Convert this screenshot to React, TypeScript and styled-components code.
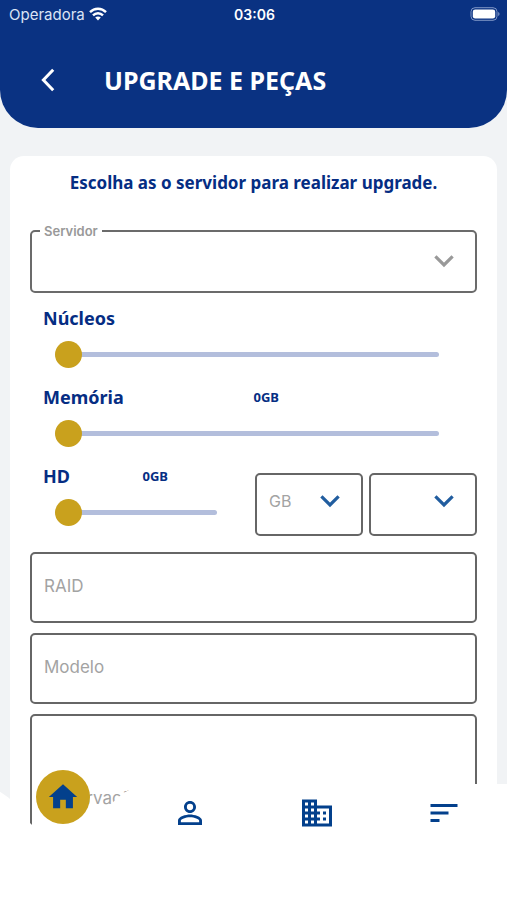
import React, { useState } from "react";
import styled, { createGlobalStyle } from "styled-components";
import { MdDomain, MdHome, MdPersonOutline, MdSort } from "react-icons/md";

const navy = "#0a3282";
const gold = "#c9a11d";
const bodyFont = `Inter, "Liberation Sans", sans-serif`;
const headingFont = `"Noto Sans", "Open Sans", sans-serif`;

const GlobalStyle = createGlobalStyle`
  *, *::before, *::after { box-sizing: border-box; }
  body { margin: 0; background: #f1f3f5; font-family: ${bodyFont}; }
  button, input, select, textarea { font: inherit; }
`;

const Screen = styled.div`
  display: flex;
  flex-direction: column;
  min-height: 100vh;
`;

const Header = styled.header`
  background: ${navy};
  color: #fff;
  border-radius: 0 0 38px 38px;
  padding-bottom: 24px;
`;

const StatusBar = styled.div`
  display: grid;
  grid-template-columns: 1fr auto 1fr;
  align-items: center;
  height: 28px;
  padding: 0 7px 0 9px;
  font-size: 14px;
`;

const Carrier = styled.span`
  display: flex;
  align-items: center;
  gap: 4px;
  color: #dbe4f5;
  font-size: 15px;
`;

const Clock = styled.time`
  font-weight: 600;
`;

const BatteryIcon = styled.svg`
  justify-self: end;
`;

const TitleBar = styled.div`
  display: flex;
  align-items: center;
  gap: 36px;
  height: 48px;
  margin-top: 28px;
  padding-left: 28px;
`;

const BackButton = styled.button`
  display: grid;
  place-items: center;
  width: 40px;
  height: 40px;
  padding: 0;
  border: 0;
  background: none;
  color: inherit;
`;

const Title = styled.h1`
  margin: 0;
  font: 700 25px/32px ${headingFont};
`;

const Card = styled.main`
  flex: 1;
  display: flex;
  flex-direction: column;
  margin: 28px 10px 0;
  padding: 14px 20px 16px;
  border-radius: 14px;
  background: #fff;
`;

const Intro = styled.p`
  margin: 0 0 28px;
  text-align: center;
  color: #052d83;
  font: 700 17px/26px ${headingFont};
`;

const ServerField = styled.fieldset`
  min-width: 0;
  margin: 0 0 12px;
  padding: 0;
  border: 2px solid #6b6b6b;
  border-radius: 5px;
`;

const ServerLegend = styled.legend`
  margin-left: 8px;
  padding: 0 4px;
  color: #999;
  font-size: 13px;
  font-weight: 600;
  line-height: 14px;
`;

const SelectBox = styled.div<{ $outlined?: boolean; $height: number }>`
  display: grid;
  align-items: center;
  width: 100%;
  height: ${(p) => p.$height}px;
  padding-bottom: 8px;
  border: ${(p) => (p.$outlined ? "2px solid #666" : "0")};
  border-radius: 5px;

  > * {
    grid-area: 1 / 1;
  }
`;

const Select = styled.select`
  width: 100%;
  height: 100%;
  padding: 0 44px 0 12px;
  appearance: none;
  border: 0;
  background: none;
  color: #a3a3a3;
  font-size: 16px;
`;

const Chevron = styled.svg<{ $color: string }>`
  justify-self: end;
  margin-right: 20px;
  stroke: ${(p) => p.$color};
  pointer-events: none;
`;

const SliderList = styled.div`
  display: flex;
  flex-direction: column;
  gap: 16px;
`;

const SliderField = styled.div`
  flex: 1;
  min-width: 0;
`;

const SliderHead = styled.div`
  display: grid;
  grid-template-columns: 1fr 1fr;
  align-items: center;
  color: #052d83;
  font: 700 18px/26px ${headingFont};
`;

const SliderLabel = styled.label`
  padding-left: 13px;
`;

const SliderValue = styled.output`
  font-size: 13px;
`;

const SliderTrack = styled.div`
  display: flex;
  margin-top: 10px;
  padding: 0 38px 0 25px;
`;

const Range = styled.input`
  appearance: none;
  width: 100%;
  height: 27px;
  margin: 0;
  background: none;

  &::-webkit-slider-runnable-track {
    height: 5px;
    border-radius: 3px;
    background: #b3bedc;
  }

  &::-webkit-slider-thumb {
    appearance: none;
    width: 27px;
    height: 27px;
    margin-top: -11px;
    border-radius: 50%;
    background: ${gold};
  }
`;

const DiskRow = styled.div`
  display: flex;
  align-items: flex-start;
`;

const DiskSelects = styled.div`
  display: grid;
  grid-template-columns: 108px 108px;
  gap: 6px;
  margin-top: 10px;
`;

const TextFields = styled.div`
  display: flex;
  flex-direction: column;
  gap: 10px;
  margin-top: 16px;
`;

const fieldLook = `
  width: 100%;
  border: 2px solid #666;
  border-radius: 5px;
  background: none;
  font-size: 17px;
  color: #333;
  &::placeholder { color: #a3a3a3; opacity: 1; }
`;

const TextInput = styled.input`
  ${fieldLook}
  height: 71px;
  padding: 0 12px 4px;
`;

const Notes = styled.textarea`
  ${fieldLook}
  display: block;
  height: 160px;
  padding: 72px 12px 0;
  line-height: 20px;
  resize: none;
`;

const BottomNav = styled.nav`
  position: fixed;
  inset: auto 0 0;
  height: 116px;
`;

const NavBackdrop = styled.div`
  position: absolute;
  inset: 0;
  display: grid;
  grid-template-columns: calc(12.5% + 84px) 1fr;
`;

const NavNotch = styled.div`
  display: flex;
  justify-content: flex-end;
  overflow: hidden;

  svg {
    flex: none;
  }
`;

const NavSurface = styled.div`
  background: #fff;
`;

const NavItems = styled.div`
  position: relative;
  display: grid;
  grid-template-columns: repeat(4, 1fr);
  justify-items: center;
  height: 58px;
`;

const NavButton = styled.button<{ $active?: boolean }>`
  display: grid;
  place-items: center;
  width: 54px;
  height: 54px;
  margin-top: ${(p) => (p.$active ? -14 : 2)}px;
  padding: 0;
  border: 0;
  border-radius: 50%;
  background: ${(p) => (p.$active ? gold : "none")};
  color: #03408c;
`;

function ArrowDown({ color }: { color: string }) {
  return (
    <Chevron $color={color} width="22" height="14" viewBox="0 0 22 14" fill="none" strokeWidth="3.2" aria-hidden="true">
      <path d="M2.4 2.4 11 11 19.6 2.4" />
    </Chevron>
  );
}

interface SliderProps {
  id: string;
  label: string;
  unit?: string;
}

function Slider({ id, label, unit }: SliderProps) {
  const [value, setValue] = useState(0);
  return (
    <SliderField>
      <SliderHead>
        <SliderLabel htmlFor={id}>{label}</SliderLabel>
        {unit && <SliderValue htmlFor={id}>{`${value}${unit}`}</SliderValue>}
      </SliderHead>
      <SliderTrack>
        <Range id={id} type="range" min={0} max={100} value={value} onChange={(e) => setValue(Number(e.target.value))} />
      </SliderTrack>
    </SliderField>
  );
}

export default function App() {
  return (
    <>
      <GlobalStyle />
      <Screen>
        <Header>
          <StatusBar>
            <Carrier>
              Operadora
              <svg width="18" height="14" viewBox="0 0 18 14" fill="none" stroke="#fff" strokeWidth="2.4" aria-hidden="true">
                <path d="M1 5.2C5.4.6 12.6.6 17 5.2" />
                <path d="M4 8.4c2.8-2.9 7.2-2.9 10 0" />
                <path d="M6.2 10.6c1.6-1.6 4-1.6 5.6 0L9 13.4Z" fill="#fff" stroke="none" />
              </svg>
            </Carrier>
            <Clock>03:06</Clock>
            <BatteryIcon width="30" height="14" viewBox="0 0 30 14" aria-hidden="true">
              <rect x="1" y=".7" width="26" height="12.6" rx="4" fill="none" stroke="#7f96c6" />
              <rect x="2.8" y="2.4" width="22.4" height="9.2" rx="2.4" fill="#fff" />
              <path d="M28.2 5v4c1.8-.6 1.8-3.4 0-4Z" fill="#7f96c6" />
            </BatteryIcon>
          </StatusBar>
          <TitleBar>
            <BackButton aria-label="Voltar">
              <svg width="16" height="24" viewBox="0 0 16 24" fill="none" stroke="currentColor" strokeWidth="3">
                <path d="M13.2 1.8 3.4 12l9.8 10.2" />
              </svg>
            </BackButton>
            <Title>UPGRADE E PEÇAS</Title>
          </TitleBar>
        </Header>

        <Card>
          <Intro>Escolha as o servidor para realizar upgrade.</Intro>

          <ServerField>
            <ServerLegend>
              <label htmlFor="servidor">Servidor</label>
            </ServerLegend>
            <SelectBox $height={53}>
              <Select id="servidor" defaultValue="">
                <option value="" />
              </Select>
              <ArrowDown color="#999" />
            </SelectBox>
          </ServerField>

          <SliderList>
            <Slider id="nucleos" label="Núcleos" />
            <Slider id="memoria" label="Memória" unit="GB" />
            <DiskRow>
              <Slider id="hd" label="HD" unit="GB" />
              <DiskSelects>
                <SelectBox $outlined $height={63}>
                  <Select aria-label="Unidade" defaultValue="GB">
                    <option>GB</option>
                    <option>TB</option>
                  </Select>
                  <ArrowDown color="#215d9f" />
                </SelectBox>
                <SelectBox $outlined $height={63}>
                  <Select aria-label="Tipo de disco" defaultValue="">
                    <option value="" />
                  </Select>
                  <ArrowDown color="#215d9f" />
                </SelectBox>
              </DiskSelects>
            </DiskRow>
          </SliderList>

          <TextFields>
            <TextInput aria-label="RAID" placeholder="RAID" />
            <TextInput aria-label="Modelo" placeholder="Modelo" />
            <Notes aria-label="Observação" placeholder="Observação" />
          </TextFields>
        </Card>

        <BottomNav>
          <NavBackdrop>
            <NavNotch>
              <svg width="168" height="116" viewBox="0 0 168 116" aria-hidden="true">
                <path
                  d="M0 0C10 0 22 8 30 14C42 26 52 52 84 52C116 52 126 26 138 14C146 8 158 0 168 0V116H0Z"
                  fill="#fff"
                />
              </svg>
            </NavNotch>
            <NavSurface />
          </NavBackdrop>
          <NavItems>
            <NavButton $active aria-label="Início">
              <MdHome size={34} />
            </NavButton>
            <NavButton aria-label="Perfil">
              <MdPersonOutline size={36} />
            </NavButton>
            <NavButton aria-label="Empresa">
              <MdDomain size={36} />
            </NavButton>
            <NavButton aria-label="Menu">
              <MdSort size={36} />
            </NavButton>
          </NavItems>
        </BottomNav>
      </Screen>
    </>
  );
}
